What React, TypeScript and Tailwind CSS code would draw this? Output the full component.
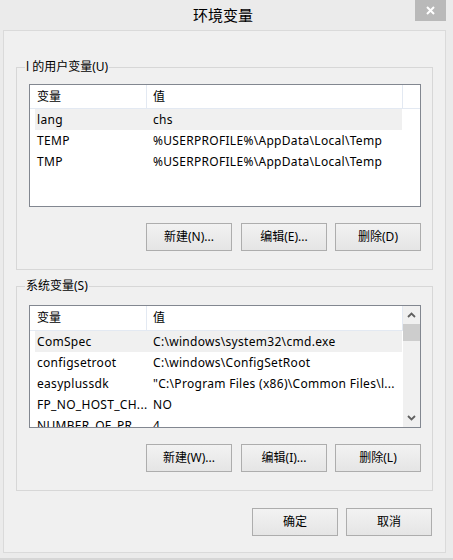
import React from "react";

const FONT = { fontFamily: '"Noto Sans", "Noto Sans CJK SC", sans-serif' };

function Btn({ label, className = "" }: { label: string; className?: string }) {
  return (
    <div
      className={
        "w-[86px] h-[28px] border border-[#adadad] bg-linear-to-b from-[#f2f2f2] to-[#e5e5e5] flex items-center justify-center text-[12px] text-black leading-[16px] " +
        className
      }
    >
      {label}
    </div>
  );
}

type Row = [string, string];

function Header({ filler }: { filler: boolean }) {
  return (
    <div className="flex h-full border-b border-[#e3e9f2] bg-white text-[12px] leading-[16px]">
      <div className="w-[117px] h-full border-r border-[#e3e9f2] pl-[7px] flex items-center">变量</div>
      <div className="w-[256px] h-full border-r border-[#e3e9f2] pl-[6px] flex items-center">值</div>
      {filler && <div className="flex-1" />}
    </div>
  );
}

function Rows({ rows }: { rows: Row[] }) {
  return (
    <div className="flex flex-col">
      {rows.map((r, i) => (
        <div
          key={i}
          className={
            "ml-[5px] w-[367px] h-[21px] shrink-0 flex items-center text-[12px] leading-[16px] tracking-[0.3px] whitespace-nowrap " +
            (i === 0 ? "bg-[#f0f0f0]" : "")
          }
        >
          <div className="w-[111px] shrink-0 pl-[2px]">{r[0]}</div>
          <div className="pl-[7px]">{r[1]}</div>
        </div>
      ))}
    </div>
  );
}

function Chevron({ up }: { up: boolean }) {
  return (
    <svg width="9" height="6" viewBox="0 0 9 6">
      <path
        d={up ? "M1 5 L4.5 1.5 L8 5" : "M1 1 L4.5 4.5 L8 1"}
        fill="none"
        stroke="#606060"
        strokeWidth="1.8"
      />
    </svg>
  );
}

export default function App() {
  const userRows: Row[] = [
    ["lang", "chs"],
    ["TEMP", "%USERPROFILE%\\AppData\\Local\\Temp"],
    ["TMP", "%USERPROFILE%\\AppData\\Local\\Temp"],
  ];
  const sysRows: Row[] = [
    ["ComSpec", "C:\\windows\\system32\\cmd.exe"],
    ["configsetroot", "C:\\windows\\ConfigSetRoot"],
    ["easyplussdk", "\"C:\\Program Files (x86)\\Common Files\\l..."],
    ["FP_NO_HOST_CH...", "NO"],
    ["NUMBER_OF_PR...", "4"],
  ];

  return (
    <div
      className="w-[453px] h-[560px] bg-[#ebebeb] border-b-2 border-[#d6d6d6] text-black overflow-hidden"
      style={FONT}
    >
      {/* title bar */}
      <div className="relative w-[446px] h-[30px] flex items-center justify-center">
        <span className="text-[15px] leading-[18px]" style={{ fontFamily: '"Noto Sans CJK SC", sans-serif' }}>
          环境变量
        </span>
        <div className="absolute right-0 top-0 w-[31px] h-[21px] bg-[#b9b9b9] flex items-center justify-center">
          <svg width="9" height="9" viewBox="0 0 9 9">
            <path d="M1 1 L8 8 M8 1 L1 8" stroke="#ffffff" strokeWidth="2" />
          </svg>
        </div>
      </div>

      {/* client frame */}
      <div className="ml-[3px] w-[443px] h-[523px] border border-[#dadada] bg-[#f0f0f0] flex flex-col">
        {/* user group */}
        <div className="relative ml-[12px] mt-[36px] w-[417px] border border-[#d7d7d7] flex flex-col">
          <div className="absolute left-[8px] -top-[9px] px-[1px] bg-[#f0f0f0] text-[12px] leading-[16px] whitespace-nowrap">
            l 的用户变量(U)
          </div>
          <div className="ml-[12px] mt-[16px] w-[392px] h-[123px] border border-[#828790] bg-white flex flex-col overflow-hidden">
            <div className="h-[24px] shrink-0">
              <Header filler />
            </div>
            <Rows rows={userRows} />
          </div>
          <div className="ml-[12px] mt-[16px] mb-[18px] w-[392px] flex justify-end">
            <Btn label="新建(N)..." />
            <Btn label="编辑(E)..." className="ml-[9px]" />
            <Btn label="删除(D)" className="ml-[8px]" />
          </div>
        </div>

        {/* system group */}
        <div className="relative ml-[12px] mt-[16px] w-[417px] border border-[#d7d7d7] flex flex-col">
          <div className="absolute left-[8px] -top-[9px] px-[1px] bg-[#f0f0f0] text-[12px] leading-[16px] whitespace-nowrap">
            系统变量(S)
          </div>
          <div className="ml-[12px] mt-[18px] w-[392px] h-[123px] border border-[#828790] bg-white flex overflow-hidden">
            <div className="w-[373px] flex flex-col overflow-hidden">
              <div className="h-[25px] shrink-0">
                <Header filler={false} />
              </div>
              <Rows rows={sysRows} />
            </div>
            <div className="w-[17px] h-full bg-[#f0f0f0] flex flex-col">
              <div className="h-[18px] flex items-center justify-center">
                <Chevron up />
              </div>
              <div className="h-[17px] bg-[#cdcdcd]" />
              <div className="flex-1" />
              <div className="h-[18px] flex items-center justify-center">
                <Chevron up={false} />
              </div>
            </div>
          </div>
          <div className="ml-[12px] mt-[16px] mb-[18px] w-[392px] flex justify-end">
            <Btn label="新建(W)..." />
            <Btn label="编辑(I)..." className="ml-[9px]" />
            <Btn label="删除(L)" className="ml-[8px]" />
          </div>
        </div>

        {/* OK / Cancel */}
        <div className="ml-[12px] mt-[17px] w-[416px] flex justify-end">
          <Btn label="确定" />
          <Btn label="取消" className="ml-[8px]" />
        </div>
      </div>
    </div>
  );
}
